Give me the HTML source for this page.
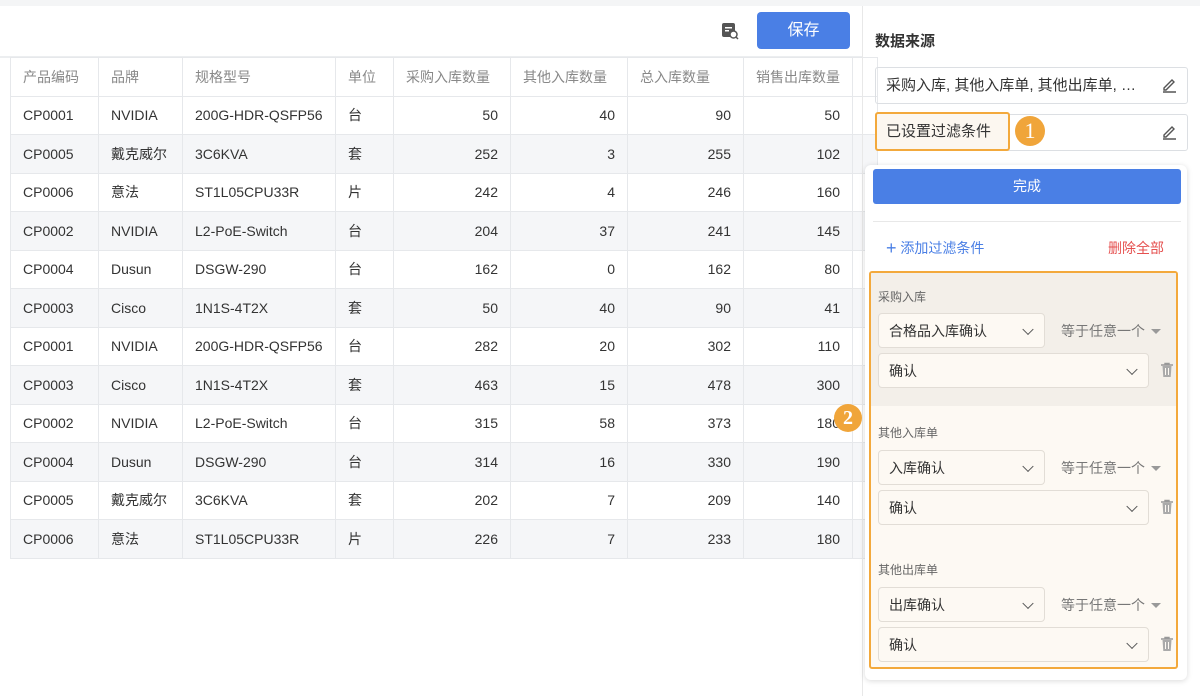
<!DOCTYPE html>
<html><head><meta charset="utf-8"><style>
*{box-sizing:border-box;margin:0;padding:0}
body{width:1200px;height:696px;overflow:hidden;background:#fff;font-family:"Liberation Sans","Noto Sans CJK SC",sans-serif;position:relative;color:#333}
.a{position:absolute}
table{position:absolute;left:10px;top:57px;border-collapse:collapse;font-size:14px}
td{height:38.5px;border:1px solid #e6e8eb;padding:0 12px;white-space:nowrap;color:#333}
tr.h td{color:#888;background:#fff}
tr:nth-child(odd):not(.h) td{background:#f5f6f8}
td.n{text-align:right}
.sel{position:absolute;background:#fdf9f3;border:1px solid #e2ddd6;border-radius:4px;font-size:14px;color:#333;padding-left:10px;display:flex;align-items:center}
.chev{position:absolute;right:12px;top:50%;width:8px;height:8px;border-right:1.5px solid #555;border-bottom:1.5px solid #555;transform:translateY(-70%) rotate(45deg)}
.lbl{position:absolute;font-size:12px;color:#666}
.eq{position:absolute;font-size:14px;color:#777}
.eq:after{content:"";position:absolute;right:-16px;top:8px;border:5px solid transparent;border-top:5px solid #999}
.trash{position:absolute}
</style></head><body>
<div class="a" style="left:0;top:0;width:1200px;height:6px;background:#f4f5f6"></div>
<svg class="a" style="left:721px;top:22px" width="18" height="18" viewBox="0 0 18 18"><rect x="1" y="1" width="13" height="14" rx="2" fill="#555"/><rect x="4" y="5" width="7" height="1.5" fill="#fff"/><rect x="4" y="8" width="4" height="1.5" fill="#fff"/><circle cx="12.5" cy="12.5" r="3.5" fill="#fff" stroke="#555" stroke-width="1.5"/><line x1="15" y1="15" x2="17" y2="17" stroke="#555" stroke-width="1.5"/></svg>
<div class="a" style="left:757px;top:12px;width:93px;height:37px;background:#4a7fe5;border-radius:4px;color:#fff;font-size:16px;text-align:center;line-height:37px">保存</div>
<div class="a" style="left:0;top:56px;width:862px;height:2px;background:#eceef0"></div>
<table>
<tr class="h"><td style="width:88px">产品编码</td><td style="width:84px">品牌</td><td style="width:153px">规格型号</td><td style="width:58px">单位</td><td style="width:117px">采购入库数量</td><td style="width:117px">其他入库数量</td><td style="width:116px">总入库数量</td><td style="width:105px">销售出库数量</td><td style="width:14px"></td></tr>
<tr><td>CP0001</td><td>NVIDIA</td><td>200G-HDR-QSFP56</td><td>台</td><td class="n">50</td><td class="n">40</td><td class="n">90</td><td class="n">50</td><td></td></tr>
<tr><td>CP0005</td><td>戴克威尔</td><td>3C6KVA</td><td>套</td><td class="n">252</td><td class="n">3</td><td class="n">255</td><td class="n">102</td><td></td></tr>
<tr><td>CP0006</td><td>意法</td><td>ST1L05CPU33R</td><td>片</td><td class="n">242</td><td class="n">4</td><td class="n">246</td><td class="n">160</td><td></td></tr>
<tr><td>CP0002</td><td>NVIDIA</td><td>L2-PoE-Switch</td><td>台</td><td class="n">204</td><td class="n">37</td><td class="n">241</td><td class="n">145</td><td></td></tr>
<tr><td>CP0004</td><td>Dusun</td><td>DSGW-290</td><td>台</td><td class="n">162</td><td class="n">0</td><td class="n">162</td><td class="n">80</td><td></td></tr>
<tr><td>CP0003</td><td>Cisco</td><td>1N1S-4T2X</td><td>套</td><td class="n">50</td><td class="n">40</td><td class="n">90</td><td class="n">41</td><td></td></tr>
<tr><td>CP0001</td><td>NVIDIA</td><td>200G-HDR-QSFP56</td><td>台</td><td class="n">282</td><td class="n">20</td><td class="n">302</td><td class="n">110</td><td></td></tr>
<tr><td>CP0003</td><td>Cisco</td><td>1N1S-4T2X</td><td>套</td><td class="n">463</td><td class="n">15</td><td class="n">478</td><td class="n">300</td><td></td></tr>
<tr><td>CP0002</td><td>NVIDIA</td><td>L2-PoE-Switch</td><td>台</td><td class="n">315</td><td class="n">58</td><td class="n">373</td><td class="n">180</td><td></td></tr>
<tr><td>CP0004</td><td>Dusun</td><td>DSGW-290</td><td>台</td><td class="n">314</td><td class="n">16</td><td class="n">330</td><td class="n">190</td><td></td></tr>
<tr><td>CP0005</td><td>戴克威尔</td><td>3C6KVA</td><td>套</td><td class="n">202</td><td class="n">7</td><td class="n">209</td><td class="n">140</td><td></td></tr>
<tr><td>CP0006</td><td>意法</td><td>ST1L05CPU33R</td><td>片</td><td class="n">226</td><td class="n">7</td><td class="n">233</td><td class="n">180</td><td></td></tr>
</table>
<div class="a" style="left:862px;top:6px;width:1px;height:690px;background:#e8e8e8"></div>
<div class="a" style="left:875px;top:30px;font-size:15px;font-weight:bold;color:#333">数据来源</div>
<div class="a" style="left:875px;top:67px;width:313px;height:37px;border:1px solid #dcdfe3;border-radius:3px;font-size:15px;line-height:35px;padding-left:10px;color:#333">采购入库, 其他入库单, 其他出库单, …</div>
<div class="a" style="left:875px;top:114px;width:313px;height:37px;border:1px solid #dcdfe3;border-radius:3px"></div>
<div class="a" style="left:875px;top:112px;width:135px;height:39px;border:2px solid #f3a93c;border-radius:3px;background:#fcf7f0;font-size:15px;line-height:35px;padding-left:9px;color:#333">已设置过滤条件</div>
<div class="a" style="left:1015px;top:116px;width:30px;height:30px;border-radius:50%;background:#f0a53a;color:#fff;font-size:22px;text-align:center;line-height:30px;font-family:'Liberation Serif',serif">1</div>
<svg class="a" style="left:1160px;top:76px" width="18" height="18" viewBox="0 0 18 18"><path d="M4 12L12 4l2 2-8 8H4z M3 16h13" fill="none" stroke="#555" stroke-width="1.4"/></svg>
<svg class="a" style="left:1160px;top:123px" width="18" height="18" viewBox="0 0 18 18"><path d="M4 12L12 4l2 2-8 8H4z M3 16h13" fill="none" stroke="#555" stroke-width="1.4"/></svg>
<div class="a" style="left:865px;top:165px;width:322px;height:515px;background:#fff;border-radius:6px;box-shadow:0 1px 6px rgba(0,0,0,.15)"></div>
<div class="a" style="left:873px;top:169px;width:308px;height:35px;background:#4a7fe5;border-radius:3px;color:#fff;font-size:14px;text-align:center;line-height:35px">完成</div>
<div class="a" style="left:873px;top:221px;width:308px;height:1px;background:#e8e8e8"></div>
<div class="a" style="left:886px;top:237px;font-size:14px;color:#4a7fe5"><span style="font-size:18px;position:relative;top:1px">+</span> 添加过滤条件</div>
<div class="a" style="left:1108px;top:238px;font-size:14px;color:#e5504f">删除全部</div>
<div class="a" style="left:869px;top:271px;width:309px;height:398px;border:2px solid #f3a93c;border-radius:3px;background:#fdf9f3;overflow:hidden"><div style="height:133px;background:#f3efe9"></div></div>
<div class="a" style="left:834px;top:404px;width:28px;height:28px;border-radius:50%;background:#f0a53a;color:#fff;font-size:20px;text-align:center;line-height:28px;font-family:'Liberation Serif',serif;font-weight:bold">2</div>

<div class="lbl" style="left:878px;top:288px">采购入库</div>
<div class="sel" style="left:878px;top:313px;width:167px;height:35px">合格品入库确认<i class="chev"></i></div>
<div class="eq" style="left:1061px;top:321px">等于任意一个</div>
<div class="sel" style="left:878px;top:353px;width:271px;height:35px">确认<i class="chev"></i></div>
<svg class="trash" style="left:1160px;top:362px" width="14" height="16" viewBox="0 0 14 16"><path d="M1 3h12M5 3V1.5h4V3" stroke="#999" stroke-width="1.4" fill="none"/><path d="M2.5 4h9l-.8 11h-7.4z" fill="#aaa"/><path d="M5.5 6v7M8.5 6v7" stroke="#fdf9f3" stroke-width="1"/></svg>

<div class="lbl" style="left:878px;top:424px">其他入库单</div>
<div class="sel" style="left:878px;top:450px;width:167px;height:35px">入库确认<i class="chev"></i></div>
<div class="eq" style="left:1061px;top:458px">等于任意一个</div>
<div class="sel" style="left:878px;top:490px;width:271px;height:35px">确认<i class="chev"></i></div>
<svg class="trash" style="left:1160px;top:499px" width="14" height="16" viewBox="0 0 14 16"><path d="M1 3h12M5 3V1.5h4V3" stroke="#999" stroke-width="1.4" fill="none"/><path d="M2.5 4h9l-.8 11h-7.4z" fill="#aaa"/><path d="M5.5 6v7M8.5 6v7" stroke="#fdf9f3" stroke-width="1"/></svg>

<div class="lbl" style="left:878px;top:561px">其他出库单</div>
<div class="sel" style="left:878px;top:587px;width:167px;height:35px">出库确认<i class="chev"></i></div>
<div class="eq" style="left:1061px;top:595px">等于任意一个</div>
<div class="sel" style="left:878px;top:627px;width:271px;height:35px">确认<i class="chev"></i></div>
<svg class="trash" style="left:1160px;top:636px" width="14" height="16" viewBox="0 0 14 16"><path d="M1 3h12M5 3V1.5h4V3" stroke="#999" stroke-width="1.4" fill="none"/><path d="M2.5 4h9l-.8 11h-7.4z" fill="#aaa"/><path d="M5.5 6v7M8.5 6v7" stroke="#fdf9f3" stroke-width="1"/></svg>
</body></html>
